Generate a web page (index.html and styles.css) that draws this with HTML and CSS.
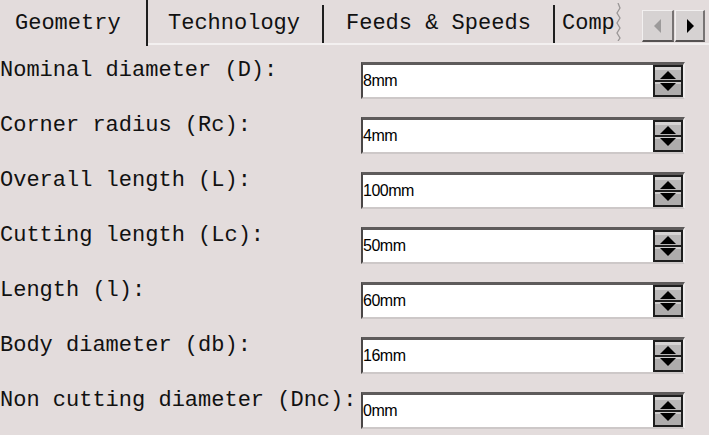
FILE: index.html
```html
<!DOCTYPE html>
<html>
<head>
<meta charset="utf-8">
<link rel="stylesheet" href="styles.css">
</head>
<body>
<div class="tabs">
  <div class="tab tab-active">Geometry</div>
  <div class="sep sep-full"></div>
  <div class="rest">
    <div class="tab tab-tech">Technology</div>
    <div class="sep"></div>
    <div class="tab tab-feeds">Feeds &amp; Speeds</div>
    <div class="sep"></div>
    <div class="tab tab-comp">Comp</div>
    <svg class="jag" width="8" height="38" viewBox="0 0 8 38"><polyline points="3,0 5,5 2,10 5,15 2,20 5,25 2,30 5,35 3,38" fill="none" stroke="#9a9696" stroke-width="1.3"/></svg>
    <div class="scroll">
      <div class="sbtn sbtn-left"><svg width="10" height="14" viewBox="0 0 10 14"><polygon points="8,0 8,14 1,7" fill="#9c9a9a"/></svg></div>
      <div class="sbtn sbtn-right"><svg width="10" height="14" viewBox="0 0 10 14"><polygon points="2,0 2,14 9,7" fill="#000"/></svg></div>
    </div>
  </div>
</div>
<div class="form">
  <div class="row"><div class="label">Nominal diameter (D):</div><div class="field"><span class="value">8mm</span><svg class="spin" width="30" height="32" viewBox="0 0 30 32"><rect width="30" height="32" fill="#1e1e1e"/><rect x="2" y="2" width="26" height="13" fill="#b9b7b7"/><rect x="2" y="2" width="26" height="3" fill="#d6d4d4"/><rect x="2" y="17" width="26" height="13" fill="#aeacac"/><rect x="2" y="17" width="26" height="2" fill="#cfcdcd"/><polygon points="7,14 23,14 15,6" fill="#000"/><polygon points="7,18 23,18 15,26" fill="#000"/></svg></div></div>
  <div class="row"><div class="label">Corner radius (Rc):</div><div class="field"><span class="value">4mm</span><svg class="spin" width="30" height="32" viewBox="0 0 30 32"><rect width="30" height="32" fill="#1e1e1e"/><rect x="2" y="2" width="26" height="13" fill="#b9b7b7"/><rect x="2" y="2" width="26" height="3" fill="#d6d4d4"/><rect x="2" y="17" width="26" height="13" fill="#aeacac"/><rect x="2" y="17" width="26" height="2" fill="#cfcdcd"/><polygon points="7,14 23,14 15,6" fill="#000"/><polygon points="7,18 23,18 15,26" fill="#000"/></svg></div></div>
  <div class="row"><div class="label">Overall length (L):</div><div class="field"><span class="value">100mm</span><svg class="spin" width="30" height="32" viewBox="0 0 30 32"><rect width="30" height="32" fill="#1e1e1e"/><rect x="2" y="2" width="26" height="13" fill="#b9b7b7"/><rect x="2" y="2" width="26" height="3" fill="#d6d4d4"/><rect x="2" y="17" width="26" height="13" fill="#aeacac"/><rect x="2" y="17" width="26" height="2" fill="#cfcdcd"/><polygon points="7,14 23,14 15,6" fill="#000"/><polygon points="7,18 23,18 15,26" fill="#000"/></svg></div></div>
  <div class="row"><div class="label">Cutting length (Lc):</div><div class="field"><span class="value">50mm</span><svg class="spin" width="30" height="32" viewBox="0 0 30 32"><rect width="30" height="32" fill="#1e1e1e"/><rect x="2" y="2" width="26" height="13" fill="#b9b7b7"/><rect x="2" y="2" width="26" height="3" fill="#d6d4d4"/><rect x="2" y="17" width="26" height="13" fill="#aeacac"/><rect x="2" y="17" width="26" height="2" fill="#cfcdcd"/><polygon points="7,14 23,14 15,6" fill="#000"/><polygon points="7,18 23,18 15,26" fill="#000"/></svg></div></div>
  <div class="row"><div class="label">Length (l):</div><div class="field"><span class="value">60mm</span><svg class="spin" width="30" height="32" viewBox="0 0 30 32"><rect width="30" height="32" fill="#1e1e1e"/><rect x="2" y="2" width="26" height="13" fill="#b9b7b7"/><rect x="2" y="2" width="26" height="3" fill="#d6d4d4"/><rect x="2" y="17" width="26" height="13" fill="#aeacac"/><rect x="2" y="17" width="26" height="2" fill="#cfcdcd"/><polygon points="7,14 23,14 15,6" fill="#000"/><polygon points="7,18 23,18 15,26" fill="#000"/></svg></div></div>
  <div class="row"><div class="label">Body diameter (db):</div><div class="field"><span class="value">16mm</span><svg class="spin" width="30" height="32" viewBox="0 0 30 32"><rect width="30" height="32" fill="#1e1e1e"/><rect x="2" y="2" width="26" height="13" fill="#b9b7b7"/><rect x="2" y="2" width="26" height="3" fill="#d6d4d4"/><rect x="2" y="17" width="26" height="13" fill="#aeacac"/><rect x="2" y="17" width="26" height="2" fill="#cfcdcd"/><polygon points="7,14 23,14 15,6" fill="#000"/><polygon points="7,18 23,18 15,26" fill="#000"/></svg></div></div>
  <div class="row"><div class="label">Non cutting diameter (Dnc):</div><div class="field"><span class="value">0mm</span><svg class="spin" width="30" height="32" viewBox="0 0 30 32"><rect width="30" height="32" fill="#1e1e1e"/><rect x="2" y="2" width="26" height="13" fill="#b9b7b7"/><rect x="2" y="2" width="26" height="3" fill="#d6d4d4"/><rect x="2" y="17" width="26" height="13" fill="#aeacac"/><rect x="2" y="17" width="26" height="2" fill="#cfcdcd"/><polygon points="7,14 23,14 15,6" fill="#000"/><polygon points="7,18 23,18 15,26" fill="#000"/></svg></div></div>
</div>
</body>
</html>
```
FILE: styles.css
```css
html, body {
  margin: 0;
  padding: 0;
}
body {
  width: 709px;
  height: 435px;
  overflow: hidden;
  background: #e3dcdc;
  color: #111;
  font-family: "Liberation Mono", "DejaVu Sans Mono", monospace;
}
.tabs {
  display: flex;
  height: 45px;
}
.tab {
  box-sizing: border-box;
  font-size: 22px;
  line-height: 22px;
  padding-top: 13px;
  white-space: nowrap;
}
.tab-active {
  width: 146px;
  padding-left: 15px;
}
.sep {
  width: 2px;
  height: 38px;
  margin-top: 5px;
  background: #1e1e1e;
}
.sep-full {
  height: 46px;
  margin-top: 0;
}
.rest {
  flex: 1;
  display: flex;
  box-sizing: border-box;
  height: 45px;
  border-bottom: 2px solid #f3f0f0;
}
.tab-tech {
  width: 174px;
  padding-left: 20px;
}
.tab-feeds {
  width: 229px;
  padding-left: 22px;
}
.tab-comp {
  width: 60px;
  padding-left: 7px;
  overflow: hidden;
}
.jag {
  margin-top: 3px;
  flex: none;
}
.scroll {
  display: flex;
  gap: 1px;
  margin-left: 19px;
  margin-top: 10px;
  height: 32px;
}
.sbtn {
  box-sizing: border-box;
  height: 32px;
  display: flex;
  align-items: center;
  justify-content: center;
  background: #d6d2d2;
  border-top: 1px solid #f2f0f0;
  border-left: 1px solid #f2f0f0;
  border-right: 2px solid #777373;
  border-bottom: 2px solid #555151;
}
.sbtn-left {
  width: 32px;
}
.sbtn-right {
  width: 30px;
}
.form {
  padding-top: 17px;
}
.row {
  display: grid;
  grid-template-columns: 361px 324px;
  height: 55px;
  align-items: start;
}
.label {
  font-size: 22px;
  line-height: 18px;
  white-space: nowrap;
}
.field {
  box-sizing: border-box;
  height: 37px;
  display: flex;
  align-items: center;
  justify-content: space-between;
  background: #fff;
  border-top: 3px solid #5e5b5b;
  border-left: 2px solid #4a4747;
  border-right: 2px solid #efecec;
  border-bottom: 2px solid #cdc8c8;
}
.value {
  font-family: "Liberation Sans", Arial, sans-serif;
  font-size: 16px;
  letter-spacing: -0.5px;
  color: #000;
}
.spin {
  align-self: flex-start;
  flex: none;
}
```
